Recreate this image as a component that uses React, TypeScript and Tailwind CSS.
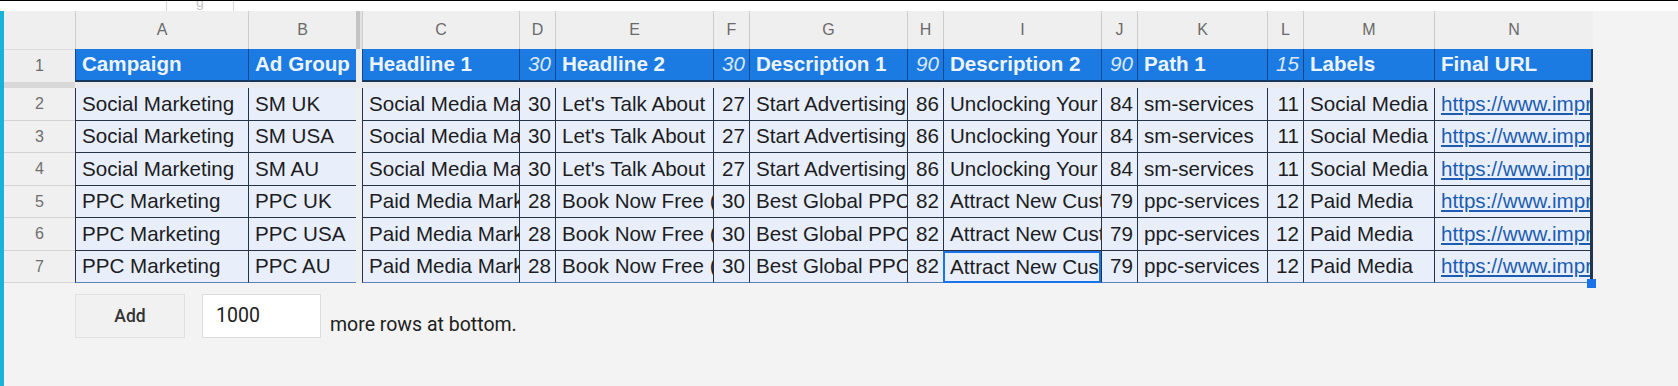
import React from 'react';

type Col = { l: string; w: string; head: string; num?: boolean };

const cols: Col[] = [
  { l: 'A', w: 'w-[173px]', head: 'Campaign' },
  { l: 'B', w: 'w-[108px]', head: 'Ad Group' },
  { l: 'C', w: 'w-[157px]', head: 'Headline 1' },
  { l: 'D', w: 'w-[36px]', head: '30', num: true },
  { l: 'E', w: 'w-[158px]', head: 'Headline 2' },
  { l: 'F', w: 'w-[36px]', head: '30', num: true },
  { l: 'G', w: 'w-[158px]', head: 'Description 1' },
  { l: 'H', w: 'w-[36px]', head: '90', num: true },
  { l: 'I', w: 'w-[158px]', head: 'Description 2' },
  { l: 'J', w: 'w-[36px]', head: '90', num: true },
  { l: 'K', w: 'w-[130px]', head: 'Path 1' },
  { l: 'L', w: 'w-[36px]', head: '15', num: true },
  { l: 'M', w: 'w-[131px]', head: 'Labels' },
  { l: 'N', w: 'w-[159px]', head: 'Final URL' },
];

const sm = [
  'Social Media Marketing Experts',
  '30',
  "Let's Talk About\u00a0\u00a0Your Growth",
  '27',
  'Start Advertising With Us Today And Grow Your Brand Online Now Fast',
  '86',
  'Unclocking Your Potential With Expert Social Media Marketing',
  '84',
  'sm-services',
  '11',
  'Social Media',
  'https://www.improvemysearchranking.com/',
];
const ppc = [
  'Paid Media Marketing Experts',
  '28',
  'Book Now Free (Consultation)',
  '30',
  'Best Global PPC Agency For Results Driven Campaigns Across Search',
  '82',
  'Attract New Customers With Our Paid Media Services',
  '79',
  'ppc-services',
  '12',
  'Paid Media',
  'https://www.improvemysearchranking.com/',
];

const rows: string[][] = [
  ['Social Marketing', 'SM UK', ...sm],
  ['Social Marketing', 'SM USA', ...sm],
  ['Social Marketing', 'SM AU', ...sm],
  ['PPC Marketing', 'PPC UK', ...ppc],
  ['PPC Marketing', 'PPC USA', ...ppc],
  ['PPC Marketing', 'PPC AU', ...ppc],
];

const rowH = ['h-[33px]', 'h-[32px]', 'h-[33px]', 'h-[32px]', 'h-[33px]', 'h-[32px]'];

const cellFont = { fontFamily: '"Liberation Sans", Arial, sans-serif' };
const uiFont = { fontFamily: 'Roboto, "Liberation Sans", sans-serif' };

export default function App() {
  return (
    <div className="w-[1678px] h-[386px] bg-[#f3f3f3] flex flex-col overflow-hidden" style={cellFont}>
      <div className="h-[1px] bg-black shrink-0" />
      <div className="h-[10px] bg-white shrink-0 flex overflow-hidden">
        <div className="ml-[166px] w-[68px] h-full border-x border-[#d6d6d6] flex justify-center overflow-hidden">
          <span className="text-[14px] leading-none text-[#c4c4c4] -mt-[6px]">g</span>
        </div>
      </div>
      <div className="flex flex-1">
        <div className="w-[4px] bg-[#1ab3d8] shrink-0" />
        <div className="relative flex flex-col">
          {/* column letters */}
          <div className="flex h-[38px]">
            <div className="w-[71px] shrink-0 bg-[#efefef]" />
            {cols.map((c, i) => (
              <React.Fragment key={c.l}>
                <div
                  className={`${c.w} shrink-0 bg-[#efefef] border-l border-[#cdcdcd] flex items-center justify-center text-[16px] text-[#6a6a6a]`}
                >
                  {c.l}
                </div>
                {i === 1 && (
                  <div className="w-[6px] shrink-0 flex">
                    <div className="w-[4px] bg-[#c4c4c4]" />
                    <div className="w-[2px] bg-[#e2e2e2]" />
                  </div>
                )}
              </React.Fragment>
            ))}
          </div>
          {/* header row 1 */}
          <div className="flex h-[33px]">
            <div className="w-[71px] shrink-0 bg-[#eeeeee] border-t border-[#dcdcdc] flex items-center justify-center text-[16px] text-[#6a6a6a]">
              1
            </div>
            {cols.map((c, i) => (
              <React.Fragment key={c.l}>
                <div
                  className={`${c.w} shrink-0 bg-[#1b7be2] border-l border-b-2 border-l-[#0f4a8e] border-b-[#17365e] overflow-hidden whitespace-nowrap flex items-center text-[20.6px] ${
                    c.num
                      ? 'justify-end pr-[4px] italic text-[#dbe8f9]'
                      : 'pl-[6px] font-bold text-[#eef4fc]'
                  } ${c.l === 'N' ? 'border-r-2 border-r-[#17365e]' : ''}`}
                >
                  {c.head}
                </div>
                {i === 1 && <div className="w-[6px] shrink-0 bg-[#ededed]" />}
              </React.Fragment>
            ))}
          </div>
          {/* frozen divider */}
          <div className="flex h-[6px]">
            <div className="w-[71px] shrink-0 bg-[#d8d8d8]" />
            <div className="w-[1518px] bg-[#e9ebee]" />
          </div>
          {/* data rows */}
          {rows.map((r, ri) => (
            <div key={ri} className={`flex ${rowH[ri]}`}>
              <div className="w-[71px] shrink-0 bg-[#f0f0f0] border-b border-[#d4d4d4] flex items-center justify-center text-[16px] text-[#6f6f6f]">
                {ri + 2}
              </div>
              {cols.map((c, i) => {
                const active = ri === 5 && c.l === 'I';
                const last = ri === 5;
                const base = active
                  ? 'border-2 border-[#1a73e8] pl-[5px]'
                  : `border-l border-b border-l-[#263245] ${last ? 'border-b-[#5b82b8]' : 'border-b-[#263245]'} ${
                      c.num ? 'justify-end pr-[4px]' : 'pl-[6px]'
                    }`;
                return (
                  <React.Fragment key={c.l}>
                    <div
                      className={`${c.w} shrink-0 bg-[#e8effb] overflow-hidden whitespace-nowrap flex items-center text-[20.6px] text-[#1d1d1f] ${base} ${
                        c.l === 'N' ? 'border-r-[3px] border-r-[#22364f]' : ''
                      }`}
                    >
                      {c.l === 'N' ? (
                        <span className="text-[#1c5db3] underline">{r[i]}</span>
                      ) : (
                        r[i]
                      )}
                    </div>
                    {i === 1 && <div className="w-[6px] shrink-0 bg-[#eeeff1]" />}
                  </React.Fragment>
                );
              })}
            </div>
          ))}
          {/* fill handle */}
          <div className="absolute left-[1583px] top-[268px] w-[9px] h-[9px] bg-[#1a73e8]" />
          {/* add rows */}
          <div className="flex items-start mt-[11px] ml-[71px]" style={uiFont}>
            <div className="w-[110px] h-[44px] bg-[#f1f1f1] border border-[#e1e1e1] flex items-center justify-center text-[17.5px] font-medium text-[#333]">
              Add
            </div>
            <div className="ml-[17px] w-[119px] h-[44px] bg-white border border-[#dcdcdc] flex items-center pl-[13px] text-[19.5px] text-[#202020]">
              1000
            </div>
            <div className="ml-[9px] mt-[16px] text-[19.5px] text-[#202020]">more rows at bottom.</div>
          </div>
        </div>
      </div>
    </div>
  );
}
